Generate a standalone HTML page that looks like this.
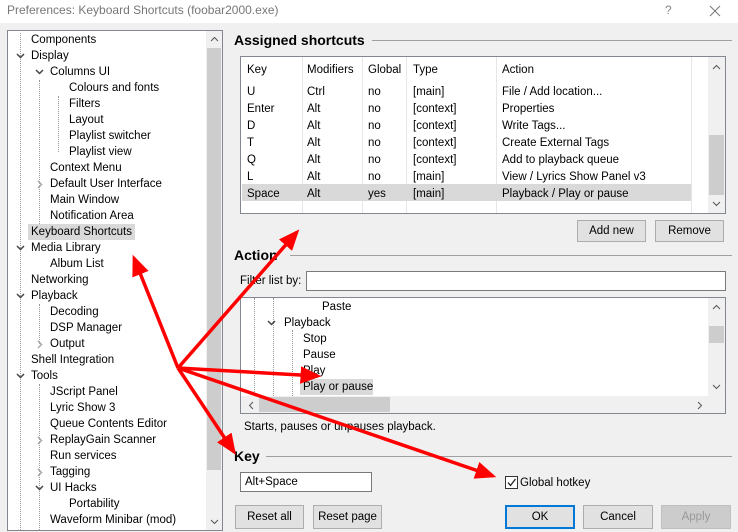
<!DOCTYPE html>
<html><head><style>
*{margin:0;padding:0;box-sizing:border-box}
body{width:738px;height:532px;background:#f0f0f0;font-family:"Liberation Sans",sans-serif;font-size:11.5px;color:#000;position:relative;overflow:hidden}
.a{position:absolute;white-space:nowrap;line-height:14px}
.box{position:absolute;background:#fff;border:1px solid #828790}
.h{position:absolute;font-weight:bold;font-size:14px;line-height:16px}
.ln{position:absolute;height:1px;background:#a0a0a0}
.btn{position:absolute;background:#e1e1e1;border:1px solid #adadad;text-align:center;line-height:20px;font-size:11.5px}
.sb{position:absolute;background:#f0f0f0}
.th{position:absolute;background:#cdcdcd}
.sel{background:#d9d9d9}
svg.c{position:absolute}
</style></head><body>
<div style="position:absolute;left:0;top:0;width:738px;height:23px;background:#fff"></div>
<div class="a" style="left:7px;top:3px;color:#777;font-size:12px">Preferences: Keyboard Shortcuts (foobar2000.exe)</div>
<div class="a" style="left:665px;top:3px;color:#888;font-size:12px">?</div>
<svg class="c" style="left:709px;top:5px" width="12" height="12"><path d="M1,1 L11,11 M11,1 L1,11" stroke="#777" stroke-width="1"/></svg>

<!-- left tree -->
<div class="box" style="left:7px;top:30px;width:216px;height:501px"></div>
<div class="sb" style="left:206px;top:31px;width:16px;height:499px"></div>
<div class="th" style="left:207px;top:48px;width:14px;height:422px"></div>
<svg class="c" style="left:210px;top:36px" width="9" height="6"><path d="M1,5 L4.5,1.5 L8,5" stroke="#555" fill="none"/></svg>
<svg class="c" style="left:210px;top:519px" width="9" height="6"><path d="M1,1 L4.5,4.5 L8,1" stroke="#555" fill="none"/></svg>
<div id="tree"></div>

<!-- assigned shortcuts -->
<div class="h" style="left:234px;top:32px">Assigned shortcuts</div>
<div class="ln" style="left:372px;top:40px;width:360px"></div>
<div class="box" style="left:240px;top:56px;width:486px;height:158px"></div>
<div class="sb" style="left:708px;top:57px;width:17px;height:156px"></div>
<div class="th" style="left:709px;top:135px;width:15px;height:60px"></div>
<svg class="c" style="left:712px;top:64px" width="9" height="6"><path d="M1,5 L4.5,1.5 L8,5" stroke="#555" fill="none"/></svg>
<svg class="c" style="left:712px;top:201px" width="9" height="6"><path d="M1,1 L4.5,4.5 L8,1" stroke="#555" fill="none"/></svg>
<div style="position:absolute;left:302px;top:57px;width:1px;height:156px;background:#e6e6e6"></div>
<div style="position:absolute;left:362px;top:57px;width:1px;height:156px;background:#e6e6e6"></div>
<div style="position:absolute;left:406px;top:57px;width:1px;height:156px;background:#e6e6e6"></div>
<div style="position:absolute;left:496px;top:57px;width:1px;height:156px;background:#e6e6e6"></div>
<div style="position:absolute;left:691px;top:57px;width:1px;height:156px;background:#e6e6e6"></div>
<div class="sel" style="position:absolute;left:242px;top:184px;width:449px;height:17px"></div>
<div id="rows"></div>
<div class="btn" style="left:577px;top:220px;width:69px;height:22px">Add new</div>
<div class="btn" style="left:655px;top:220px;width:69px;height:22px">Remove</div>

<!-- action -->
<div class="h" style="left:234px;top:247px">Action</div>
<div class="ln" style="left:290px;top:255px;width:442px"></div>
<div class="a" style="left:240px;top:274px">Filter list by:</div>
<div class="box" style="left:306px;top:271px;width:420px;height:20px;border-color:#7a7a7a"></div>
<div class="box" style="left:240px;top:297px;width:486px;height:117px"></div>
<div class="sb" style="left:708px;top:298px;width:17px;height:99px"></div>
<div class="th" style="left:709px;top:326px;width:15px;height:17px"></div>
<svg class="c" style="left:712px;top:304px" width="9" height="6"><path d="M1,5 L4.5,1.5 L8,5" stroke="#555" fill="none"/></svg>
<svg class="c" style="left:712px;top:384px" width="9" height="6"><path d="M1,1 L4.5,4.5 L8,1" stroke="#555" fill="none"/></svg>
<div class="sb" style="left:241px;top:396px;width:484px;height:17px"></div>
<div class="th" style="left:259px;top:397px;width:131px;height:15px"></div>
<svg class="c" style="left:248px;top:401px" width="6" height="9"><path d="M5,1 L1.5,4.5 L5,8" stroke="#555" fill="none"/></svg>
<svg class="c" style="left:697px;top:401px" width="6" height="9"><path d="M1,1 L4.5,4.5 L1,8" stroke="#555" fill="none"/></svg>
<div style="position:absolute;left:254px;top:298px;height:98px;border-left:1px dotted #999"></div>
<div style="position:absolute;left:273px;top:298px;height:98px;border-left:1px dotted #999"></div>
<div style="position:absolute;left:292px;top:330px;height:66px;border-left:1px dotted #999"></div>
<div class="a" style="left:322px;top:300px">Paste</div>
<svg class="c" style="left:267px;top:320px" width="9" height="6"><path d="M1,1 L4.5,4.5 L8,1" stroke="#444" stroke-width="1.5" fill="none"/></svg>
<div class="a" style="left:284px;top:316px">Playback</div>
<div class="a" style="left:303px;top:332px">Stop</div>
<div class="a" style="left:303px;top:348px">Pause</div>
<div class="a" style="left:303px;top:364px">Play</div>
<div class="sel a" style="left:300px;top:379px;width:73px;height:16px;padding-left:3px;line-height:16px">Play or pause</div>
<div class="a" style="left:244px;top:420px">Starts, pauses or unpauses playback.</div>

<!-- key -->
<div class="h" style="left:234px;top:448px">Key</div>
<div class="ln" style="left:266px;top:456px;width:466px"></div>
<div class="box" style="left:240px;top:472px;width:132px;height:20px;border-color:#7a7a7a"></div>
<div class="a" style="left:245px;top:475px">Alt+Space</div>
<div style="position:absolute;left:505px;top:476px;width:13px;height:13px;border:1px solid #333;background:#fff"></div>
<svg class="c" style="left:506px;top:477px" width="11" height="11"><path d="M2,5.5 L4.5,8.5 L9.5,2" stroke="#222" stroke-width="1.3" fill="none"/></svg>
<div class="a" style="left:520px;top:476px">Global hotkey</div>

<div class="btn" style="left:235px;top:505px;width:69px;height:24px;line-height:22px">Reset all</div>
<div class="btn" style="left:313px;top:505px;width:69px;height:24px;line-height:22px">Reset page</div>
<div class="btn" style="left:505px;top:505px;width:70px;height:24px;line-height:20px;border:2px solid #0078d7">OK</div>
<div class="btn" style="left:583px;top:505px;width:70px;height:24px;line-height:22px">Cancel</div>
<div class="btn" style="left:661px;top:505px;width:70px;height:24px;line-height:22px;color:#999;background:#ccc;border-color:#bfbfbf">Apply</div>

<svg style="position:absolute;left:0;top:0" width="738" height="532">
<defs><marker id="m" markerWidth="6" markerHeight="5" refX="5" refY="2.5" orient="auto" markerUnits="strokeWidth"><path d="M0,0 L6,2.5 L0,5 z" fill="#f00"/></marker></defs>
<g stroke="#f00" stroke-width="3.5" fill="none" marker-end="url(#m)">
<line x1="178" y1="368" x2="134" y2="258"/>
<line x1="178" y1="368" x2="297" y2="232"/>
<line x1="178" y1="368" x2="318" y2="376"/>
<line x1="178" y1="368" x2="234" y2="452"/>
<line x1="178" y1="368" x2="493" y2="476"/>
</g></svg>

<script>
var t=[["Components",31,40,0],["Display",31,56,1],["Columns UI",50,72,1],["Colours and fonts",69,88,0],["Filters",69,104],["Layout",69,120],["Playlist switcher",69,136],["Playlist view",69,152],["Context Menu",50,168],["Default User Interface",50,184,2],["Main Window",50,200],["Notification Area",50,216],["Keyboard Shortcuts",31,232,0,1],["Media Library",31,248,1],["Album List",50,264],["Networking",31,280],["Playback",31,296,1],["Decoding",50,312],["DSP Manager",50,328],["Output",50,344,2],["Shell Integration",31,360],["Tools",31,376,1],["JScript Panel",50,392],["Lyric Show 3",50,408],["Queue Contents Editor",50,424],["ReplayGain Scanner",50,440,2],["Run services",50,456],["Tagging",50,472,2],["UI Hacks",50,488,1],["Portability",69,504],["Waveform Minibar (mod)",50,520]];
var h='<div style="position:absolute;left:20px;top:33px;height:497px;border-left:1px dotted #999"></div><div style="position:absolute;left:39px;top:80px;height:144px;border-left:1px dotted #999"></div><div style="position:absolute;left:58px;top:96px;height:56px;border-left:1px dotted #999"></div><div style="position:absolute;left:39px;top:384px;height:146px;border-left:1px dotted #999"></div><div style="position:absolute;left:39px;top:304px;height:40px;border-left:1px dotted #999"></div>';
t.forEach(function(r){var y=r[2]-7;
if(r[4])h+='<div class="a sel" style="left:'+(r[1]-3)+'px;top:'+(y-1)+'px;padding:0 3px;line-height:16px">'+r[0]+'</div>';
else h+='<div class="a" style="left:'+r[1]+'px;top:'+y+'px">'+r[0]+'</div>';
if(r[3]==1)h+='<svg class="c" style="left:'+(r[1]-15)+'px;top:'+(r[2]-3)+'px" width="9" height="6"><path d="M1,1 L4.5,4.5 L8,1" stroke="#444" stroke-width="1.5" fill="none"/></svg>';
if(r[3]==2)h+='<svg class="c" style="left:'+(r[1]-13)+'px;top:'+(r[2]-4)+'px" width="6" height="9"><path d="M1,1 L4.5,4.5 L1,8" stroke="#aaa" stroke-width="1.5" fill="none"/></svg>';});
document.getElementById('tree').innerHTML=h;
var rw=[["Key","Modifiers","Global","Type","Action"],["U","Ctrl","no","[main]","File / Add location..."],["Enter","Alt","no","[context]","Properties"],["D","Alt","no","[context]","Write Tags..."],["T","Alt","no","[context]","Create External Tags"],["Q","Alt","no","[context]","Add to playback queue"],["L","Alt","no","[main]","View / Lyrics Show Panel v3"],["Space","Alt","yes","[main]","Playback / Play or pause"]];
var xs=[247,307,368,413,502],g='';
rw.forEach(function(r,i){var y=i==0?63:85+(i-1)*17;r.forEach(function(c,j){g+='<div class="a" style="left:'+xs[j]+'px;top:'+y+'px">'+c+'</div>';});});
document.getElementById('rows').innerHTML=g;
</script>
</body></html>
